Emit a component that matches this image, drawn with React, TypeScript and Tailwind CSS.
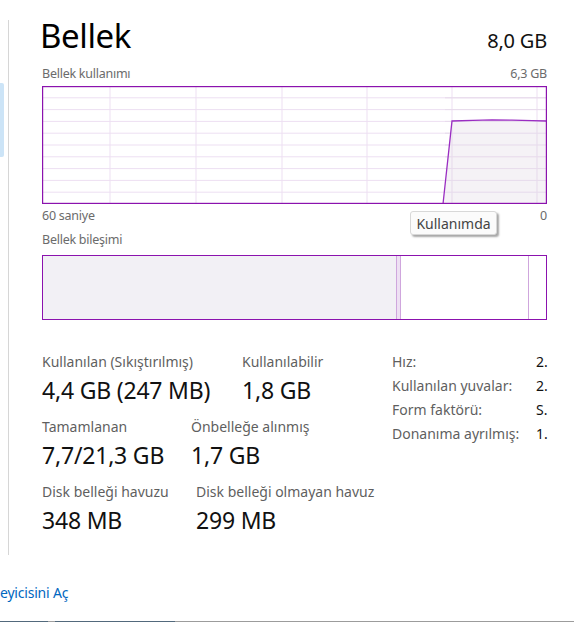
import React from "react";

const FONT = "font-['Noto_Sans','Open_Sans',sans-serif]";

function UsageChart() {
  const w = 505;
  const h = 118;
  const rows = Array.from({ length: 9 }, (_, i) => ((i + 1) * h) / 10);
  const cols = [68, 154, 240, 325, 410, 495];
  const area = "M401,118 L410,35 L431,34.4 L450,33.8 L470,34.2 L490,34.6 L505,35 L505,118 Z";
  return (
    <svg width={w} height={h} className="block">
      <rect x="0" y="0" width={w} height={h} fill="#ffffff" />
      {rows.map((y) => (
        <line key={y} x1="0" x2={w} y1={y} y2={y} stroke="#eddff2" strokeWidth="1" />
      ))}
      {cols.map((x) => (
        <line key={x} x1={x} x2={x} y1="0" y2={h} stroke="#eddff2" strokeWidth="1" />
      ))}
      <path d={area} fill="#f3f0f5" fillOpacity="0.85" />
      {rows.map((y) => (
        <line key={"o" + y} x1="403" x2={w} y1={y} y2={y} stroke="#e7dbec" strokeWidth="1" />
      ))}
      <line x1="410" x2="410" y1="35" y2={h} stroke="#e7dbec" />
      <line x1="495" x2="495" y1="35" y2={h} stroke="#e7dbec" />
      <polyline
        points="401,118 410,35 431,34.4 450,33.8 470,34.2 490,34.6 505,35"
        fill="none"
        stroke="#9a2dc2"
        strokeWidth="1.3"
      />
      <rect x="0.5" y="0.5" width={w - 1} height={h - 1} fill="none" stroke="#8b12ae" strokeWidth="1.4" />
    </svg>
  );
}

function Stat({ label, value, width }: { label: string; value: string; width?: string }) {
  return (
    <div className={width}>
      <div className="text-[14px] leading-[19px] text-[#5f5f5f] whitespace-nowrap">{label}</div>
      <div className="mt-[3px] text-[23px] leading-[32px] tracking-[-0.2px] text-[#111] whitespace-nowrap">
        {value}
      </div>
    </div>
  );
}

export default function App() {
  const specs: [string, string][] = [
    ["Hız:", "2."],
    ["Kullanılan yuvalar:", "2."],
    ["Form faktörü:", "S."],
    ["Donanıma ayrılmış:", "1."],
  ];

  return (
    <div className={`w-[574px] h-[622px] bg-white overflow-hidden flex flex-col ${FONT}`}>
      <div className="flex h-[555px]">
        {/* sidebar edge */}
        <div className="w-[9px] shrink-0 mt-[20px] border-r border-[#d6d6d6]">
          <div className="mt-[63px] h-[74px] w-[4px] bg-[#cce4f7] rounded-r-[2px]" />
        </div>

        <div className="flex-1 min-w-0 pl-[33px] pr-[27px]">
          {/* header */}
          <div className="mt-[16px] flex items-baseline justify-between">
            <div className="text-[33px] leading-[40px] tracking-[-0.4px] text-black -ml-[2px]">Bellek</div>
            <div className="text-[20px] leading-[26px] tracking-[-0.2px] text-[#111]">8,0 GB</div>
          </div>

          <div className="mt-[9px] flex justify-between text-[12.5px] leading-[17px] tracking-[-0.25px] text-[#6b6b6b]">
            <span>Bellek kullanımı</span>
            <span>6,3 GB</span>
          </div>

          <div className="mt-[4px]">
            <UsageChart />
          </div>

          <div className="relative mt-[3px] flex justify-between text-[12.5px] leading-[17px] tracking-[-0.25px] text-[#6b6b6b]">
            <span>60 saniye</span>
            <span>0</span>
            <div className="absolute left-[368px] top-[4px] h-[24px] w-[87px] flex items-center justify-center rounded-[3px] border border-[#d8d8d8] bg-[#fbfbfb] text-[14px] tracking-normal text-[#444] shadow-[2px_2px_2px_rgba(0,0,0,0.35)]">
              Kullanımda
            </div>
          </div>

          <div className="mt-[7px] text-[12.5px] leading-[17px] tracking-[-0.25px] text-[#6b6b6b]">Bellek bileşimi</div>

          {/* composition bar */}
          <div className="mt-[7px] h-[65px] flex border-[1.4px] border-[#8b12ae]">
            <div className="w-[353px] bg-[#f2f0f5]" />
            <div className="w-[5px] bg-[#eee0f3] border-x border-[#cfa6dd]" />
            <div className="w-[127px] bg-white" />
            <div className="flex-1 bg-white border-l border-[#cfa6dd]" />
          </div>

          {/* stats */}
          <div className="mt-[32px] flex">
            <div className="w-[350px] shrink-0 flex flex-col gap-[11px]">
              <div className="flex">
                <Stat label="Kullanılan (Sıkıştırılmış)" value="4,4 GB (247 MB)" width="w-[200px]" />
                <Stat label="Kullanılabilir" value="1,8 GB" />
              </div>
              <div className="flex">
                <Stat label="Tamamlanan" value="7,7/21,3 GB" width="w-[149px]" />
                <Stat label="Önbelleğe alınmış" value="1,7 GB" />
              </div>
              <div className="flex">
                <Stat label="Disk belleği havuzu" value="348 MB" width="w-[154px]" />
                <Stat label="Disk belleği olmayan havuz" value="299 MB" />
              </div>
            </div>
            <div className="-mt-[2px] flex flex-col text-[14px] leading-[24px]">
              {specs.map(([k, v]) => (
                <div key={k} className="flex">
                  <span className="w-[144px] shrink-0 text-[#5f5f5f] whitespace-nowrap">{k}</span>
                  <span className="text-[#111]">{v}</span>
                </div>
              ))}
            </div>
          </div>
        </div>
      </div>

      <div className="mt-[28px] text-[14px] leading-[20px] tracking-[-0.2px] text-[#0067c0]">eyicisini Aç</div>

      <div className="mt-auto h-[1px] flex">
        <div className="w-[48px] bg-[#52697c]" />
        <div className="w-[7px] bg-[#a0a0a0]" />
        <div className="w-[120px] bg-[#52697c]" />
        <div className="flex-1 bg-[#9c9c9c]" />
      </div>
    </div>
  );
}
